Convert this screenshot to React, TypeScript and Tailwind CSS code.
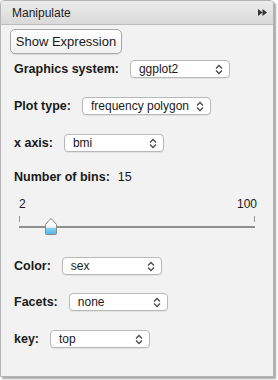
import React from "react";

const font = { fontFamily: '"Liberation Sans", Arial, sans-serif' };

function Chevrons() {
  return (
    <svg width="8" height="11" viewBox="0 0 8 11" className="shrink-0">
      <path d="M1 4.5 L4 1.5 L7 4.5" fill="none" stroke="#4a4a4a" strokeWidth="1.3" />
      <path d="M1 6.5 L4 9.5 L7 6.5" fill="none" stroke="#4a4a4a" strokeWidth="1.3" />
    </svg>
  );
}

function Select({ value, width }: { value: string; width: string }) {
  return (
    <div
      className={`flex h-[18px] items-center justify-between rounded-[4px] border border-[#b8b8b8] bg-white pl-[8px] pr-[6px] text-[12px] text-[#1a1a1a] shadow-[0_1px_0_rgba(0,0,0,0.06)] ${width}`}
    >
      <span className="leading-none">{value}</span>
      <Chevrons />
    </div>
  );
}

function Row({ label, children, className }: { label: string; children: React.ReactNode; className: string }) {
  return (
    <div className={`flex h-[18px] items-center gap-[11px] pl-[13px] ${className}`}>
      <span className="text-[12.5px] font-bold leading-none text-[#1a1a1a]">{label}</span>
      {children}
    </div>
  );
}

export default function App() {
  return (
    <div className="h-[380px] w-[278px] bg-white" style={font}>
      <div className="flex h-[377px] w-[274px] flex-col overflow-hidden rounded-t-[4px] border border-[#b4b4b4] bg-[#f1f2f1] shadow-[2px_2px_2px_rgba(0,0,0,0.35)]">
        <div className="flex h-[24px] shrink-0 items-center justify-between border-b border-[#bdbdbd] bg-gradient-to-b from-[#ececec] to-[#d9d9d9] pl-[11px] pr-[6px]">
          <span className="text-[12px] leading-none text-[#222]">Manipulate</span>
          <svg width="9" height="7" viewBox="0 0 9 7">
            <path d="M0 0 L4.5 3.5 L0 7 Z" fill="#333" />
            <path d="M4.5 0 L9 3.5 L4.5 7 Z" fill="#333" />
          </svg>
        </div>

        <div className="flex flex-col">
          <div className="pl-[9px] pt-[4px]">
            <button className="flex h-[25px] w-[112px] items-center justify-center rounded-[5px] border border-[#a9a9a9] bg-gradient-to-b from-[#ffffff] to-[#f1f1f1] text-[13px] leading-none text-[#1a1a1a] shadow-[0_1px_1px_rgba(0,0,0,0.1)]">
              Show Expression
            </button>
          </div>

          <Row label="Graphics system:" className="mt-[6px]">
            <Select value="ggplot2" width="w-[100px]" />
          </Row>
          <Row label="Plot type:" className="mt-[19px]">
            <Select value="frequency polygon" width="w-[129px]" />
          </Row>
          <Row label="x axis:" className="mt-[19px]">
            <Select value="bmi" width="w-[100px]" />
          </Row>

          <div className="mt-[16px] flex h-[18px] items-center gap-[8px] pl-[13px]">
            <span className="text-[12.5px] font-bold leading-none text-[#1a1a1a]">Number of bins:</span>
            <span className="text-[12.5px] leading-none text-[#1a1a1a]">15</span>
          </div>

          <div className="mt-[11px] flex h-[14px] items-center justify-between pl-[18px] pr-[16px] text-[12px] leading-none text-[#1a1a1a]">
            <span>2</span>
            <span>100</span>
          </div>

          <div className="relative mx-[18px] mt-[5px] h-[20px]">
            <div className="absolute left-0 top-0 h-[6px] w-px bg-[#9a9a9a]" />
            <div className="absolute right-0 top-0 h-[6px] w-px bg-[#9a9a9a]" />
            <div className="absolute left-0 right-0 top-[10px] h-[2px] bg-[#8f8f8f]" />
            <svg className="absolute left-[25px] top-[2px]" width="14" height="18" viewBox="0 0 14 18">
              <defs>
                <linearGradient id="th" x1="0" y1="0" x2="0" y2="1">
                  <stop offset="0" stopColor="#ffffff" />
                  <stop offset="0.55" stopColor="#f4f4f4" />
                  <stop offset="0.56" stopColor="#8fd3f0" />
                  <stop offset="1" stopColor="#4fb5e6" />
                </linearGradient>
              </defs>
              <path
                d="M1.5 6.5 L6 1.3 Q7 0.4 8 1.3 L12.5 6.5 L12.5 15.5 Q12.5 16.5 11.5 16.5 L2.5 16.5 Q1.5 16.5 1.5 15.5 Z"
                fill="url(#th)"
                stroke="#8a8a8a"
                strokeWidth="1"
              />
            </svg>
          </div>

          <Row label="Color:" className="mt-[21px]">
            <Select value="sex" width="w-[100px]" />
          </Row>
          <Row label="Facets:" className="mt-[18px]">
            <Select value="none" width="w-[99px]" />
          </Row>
          <Row label="key:" className="mt-[19px]">
            <Select value="top" width="w-[100px]" />
          </Row>
        </div>
      </div>
    </div>
  );
}
